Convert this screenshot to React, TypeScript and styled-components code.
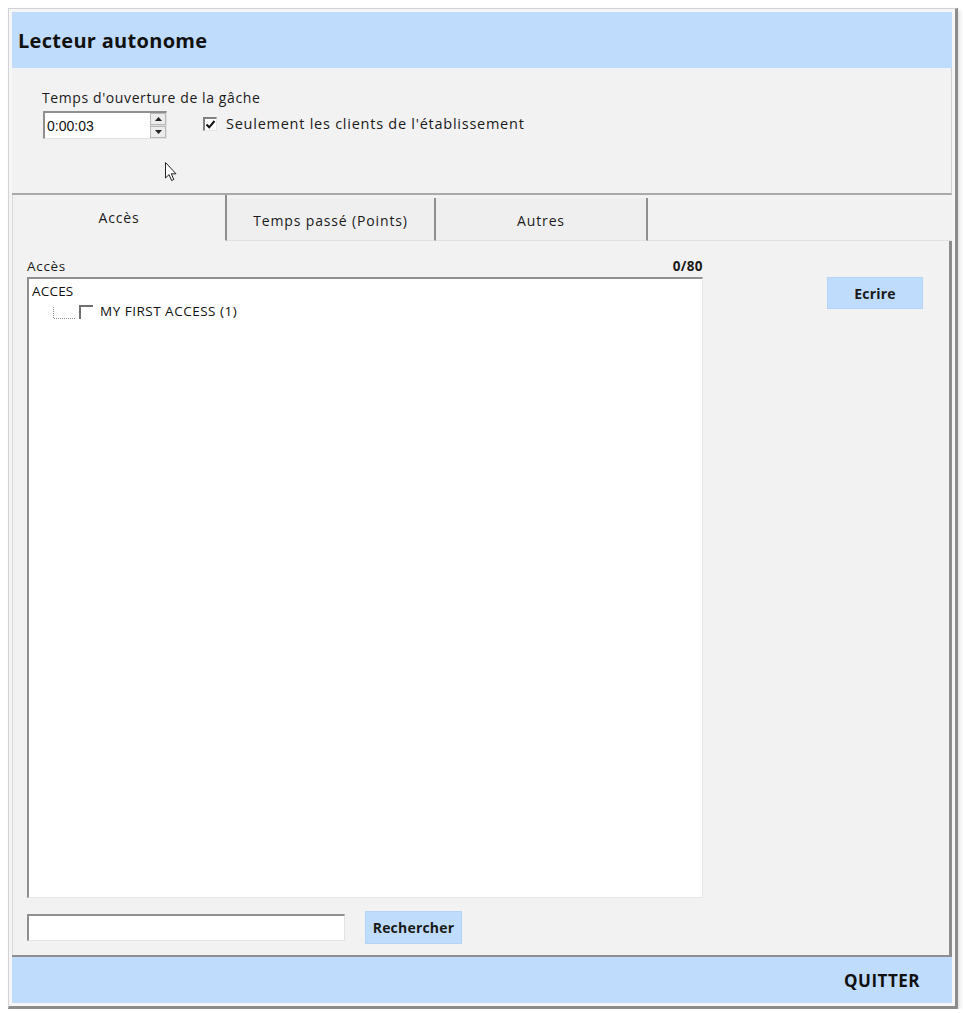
import React, { useState } from "react";
import styled, { createGlobalStyle } from "styled-components";

const FONT = `"Open Sans", "Noto Sans", "DejaVu Sans", sans-serif`;
const BLUE = "#c0dcfc";
const PANEL = "#f2f2f2";

const GlobalStyle = createGlobalStyle`
  html, body {
    margin: 0;
    padding: 0;
    background: #ffffff;
  }
  body {
    font-family: ${FONT};
    color: #1a1a1a;
  }
  * {
    box-sizing: border-box;
  }
`;

const App = () => {
  const [onlyClients, setOnlyClients] = useState<boolean>(true);
  const [access, setAccess] = useState<boolean>(false);
  const [query, setQuery] = useState<string>("");
  const [tab, setTab] = useState<number>(0);

  const tabs = [
    { label: "Accès", width: 215, offset: 0 },
    { label: "Temps passé (Points)", width: 209, offset: 3 },
    { label: "Autres", width: 212, offset: 3 },
  ];

  return (
    <>
      <GlobalStyle />
      <Window>
        <Header>
          <Title>Lecteur autonome</Title>
        </Header>

        <Settings>
          <FieldLabel>Temps d'ouverture de la gâche</FieldLabel>
          <SettingsRow>
            <Spinner>
              <SpinValue defaultValue="0:00:03" />
              <SpinButtons>
                <SpinButton>
                  <svg width="7" height="4" viewBox="0 0 7 4">
                    <path d="M0 4 L3.5 0 L7 4 Z" fill="#222" />
                  </svg>
                </SpinButton>
                <SpinButton>
                  <svg width="7" height="4" viewBox="0 0 7 4">
                    <path d="M0 0 L3.5 4 L7 0 Z" fill="#222" />
                  </svg>
                </SpinButton>
              </SpinButtons>
            </Spinner>
            <CheckLabel onClick={() => setOnlyClients(!onlyClients)}>
              <CheckBox>
                {onlyClients && (
                  <svg width="11" height="11" viewBox="0 0 11 11">
                    <path
                      d="M1.5 5.5 L4.2 8.3 L9.5 2"
                      fill="none"
                      stroke="#111"
                      strokeWidth="2"
                    />
                  </svg>
                )}
              </CheckBox>
              Seulement les clients de l'établissement
            </CheckLabel>
          </SettingsRow>
          <Cursor width="13" height="20" viewBox="0 0 13 20">
            <path
              d="M0.5 0.5 L0.5 16 L4 12.6 L6.6 18.5 L8.8 17.5 L6.3 11.8 L11 11.8 Z"
              fill="#ffffff"
              stroke="#222"
              strokeWidth="1"
              strokeLinejoin="round"
            />
          </Cursor>
        </Settings>

        <TabRow>
          {tabs.map((t, i) => (
            <Tab
              key={t.label}
              $width={t.width}
              $offset={t.offset}
              $active={tab === i}
              onClick={() => setTab(i)}
            >
              {t.label}
            </Tab>
          ))}
          <TabFiller />
        </TabRow>

        <Panel>
          <ListColumn>
            <ListHeader>
              <span>Accès</span>
              <Counter>0/80</Counter>
            </ListHeader>
            <TreeBox>
              <TreeRoot>ACCES</TreeRoot>
              <TreeItem onClick={() => setAccess(!access)}>
                <svg width="24" height="13" viewBox="0 0 24 13">
                  <path
                    d="M0.5 0 L0.5 11.5 L23 11.5"
                    fill="none"
                    stroke="#8a8a8a"
                    strokeWidth="1"
                    strokeDasharray="1 1"
                  />
                </svg>
                <TreeCheck>
                  {access && (
                    <svg width="10" height="10" viewBox="0 0 10 10">
                      <path
                        d="M1 5 L3.8 7.8 L9 1.8"
                        fill="none"
                        stroke="#111"
                        strokeWidth="2"
                      />
                    </svg>
                  )}
                </TreeCheck>
                <TreeText>MY FIRST ACCESS (1)</TreeText>
              </TreeItem>
            </TreeBox>
            <SearchRow>
              <SearchInput
                value={query}
                onChange={(e) => setQuery(e.target.value)}
              />
              <ActionButton $width={97} $height={33}>
                Rechercher
              </ActionButton>
            </SearchRow>
          </ListColumn>
          <SideColumn>
            <ActionButton $width={96} $height={32}>
              Ecrire
            </ActionButton>
          </SideColumn>
        </Panel>

        <Footer>
          <QuitButton>QUITTER</QuitButton>
        </Footer>
      </Window>
    </>
  );
};

const Window = styled.div`
  margin: 8px 0 0 8px;
  width: 950px;
  height: 1001px;
  display: flex;
  flex-direction: column;
  border: 1px solid #d2d2d2;
  border-right: 3px solid #8c8c8c;
  border-bottom: 3px solid #8c8c8c;
  padding: 3px;
  background: #f6f6f6;
  box-shadow: 2px 2px 4px rgba(0, 0, 0, 0.12);
`;

const Header = styled.div`
  height: 56px;
  flex: none;
  display: flex;
  align-items: center;
  padding-left: 6px;
  background: ${BLUE};
`;

const Title = styled.h1`
  margin: 0;
  font-family: ${FONT};
  font-size: 20px;
  font-weight: 700;
  color: #111;
  letter-spacing: 0.3px;
`;

const Settings = styled.div`
  position: relative;
  height: 127px;
  flex: none;
  padding: 21px 0 0 30px;
  background: ${PANEL};
  border-bottom: 2px solid #a9a9a9;
  border-right: 1px solid #cfcfcf;
`;

const FieldLabel = styled.div`
  font-size: 14px;
  line-height: 18px;
  letter-spacing: 0.6px;
  color: #1a1a1a;
`;

const SettingsRow = styled.div`
  display: flex;
  align-items: center;
  margin-top: 4px;
`;

const Spinner = styled.div`
  display: flex;
  width: 124px;
  height: 28px;
  margin-left: 1px;
  background: #ffffff;
  border-top: 2px solid #8f8f8f;
  border-left: 2px solid #8f8f8f;
  border-right: 1px solid #e2e2e2;
  border-bottom: 1px solid #e2e2e2;
`;

const SpinValue = styled.input`
  flex: 1;
  min-width: 0;
  border: none;
  outline: none;
  padding: 0 0 0 2px;
  font-family: "Liberation Sans", Arial, sans-serif;
  font-size: 14px;
  color: #111;
  background: transparent;
`;

const SpinButtons = styled.div`
  width: 16px;
  display: flex;
  flex-direction: column;
  gap: 1px;
  background: #dcdcdc;
`;

const SpinButton = styled.div`
  flex: 1;
  display: flex;
  align-items: center;
  justify-content: center;
  background: #ececec;
  border: 1px solid #b8b8b8;
`;

const CheckLabel = styled.label`
  display: flex;
  align-items: center;
  margin-left: 36px;
  margin-top: -3px;
  font-size: 14.5px;
  letter-spacing: 0.75px;
  color: #1a1a1a;
  cursor: default;
`;

const CheckBox = styled.span`
  width: 14px;
  height: 14px;
  margin-right: 9px;
  display: flex;
  align-items: center;
  justify-content: center;
  background: #ffffff;
  border-top: 2px solid #808080;
  border-left: 2px solid #808080;
  border-right: 1px solid #e6e6e6;
  border-bottom: 1px solid #e6e6e6;
`;

const Cursor = styled.svg`
  position: absolute;
  left: 153px;
  top: 94px;
`;

const TabRow = styled.div`
  height: 46px;
  flex: none;
  display: flex;
  background: ${PANEL};
`;

const Tab = styled.div<{ $width: number; $offset: number; $active: boolean }>`
  width: ${({ $width }) => $width}px;
  display: flex;
  align-items: center;
  justify-content: center;
  padding-top: ${({ $offset }) => $offset}px;
  font-size: 14px;
  letter-spacing: 0.85px;
  color: #1a1a1a;
  background: ${({ $active }) => ($active ? "#f2f2f2" : "#efefef")};
  border-right: 2px solid #8f8f8f;
  border-bottom: 1px solid ${({ $active }) => ($active ? PANEL : "#e2e2e2")};
  cursor: default;
  &:first-child {
    border-left: 1px solid #d8d8d8;
  }
  &:nth-child(n + 2) {
    margin-top: 3px;
  }
`;

const TabFiller = styled.div`
  flex: 1;
  border-bottom: 1px solid #e2e2e2;
`;

const Panel = styled.div`
  flex: 1;
  display: flex;
  align-items: flex-start;
  padding: 16px 0 0 14px;
  background: ${PANEL};
  border-left: 1px solid #d8d8d8;
  border-right: 3px solid #8c8c8c;
`;

const ListColumn = styled.div`
  width: 676px;
  display: flex;
  flex-direction: column;
`;

const ListHeader = styled.div`
  height: 20px;
  display: flex;
  justify-content: space-between;
  align-items: flex-start;
  font-size: 13.5px;
  line-height: 18px;
  letter-spacing: 0.7px;
  color: #1a1a1a;
`;

const Counter = styled.span`
  font-weight: 700;
  font-size: 13.5px;
  letter-spacing: 0.4px;
`;

const TreeBox = styled.div`
  height: 621px;
  padding: 3px 0 0 3px;
  background: #ffffff;
  border-top: 2px solid #8f8f8f;
  border-left: 2px solid #8f8f8f;
  border-right: 1px solid #e6e6e6;
  border-bottom: 1px solid #e6e6e6;
`;

const TreeRoot = styled.div`
  font-size: 13.5px;
  line-height: 18px;
  letter-spacing: 0.2px;
  color: #111;
`;

const TreeItem = styled.div`
  display: flex;
  align-items: flex-end;
  padding-left: 21px;
  height: 20px;
`;

const TreeCheck = styled.span`
  width: 14px;
  height: 14px;
  margin: 0 0 1px 2px;
  display: flex;
  align-items: center;
  justify-content: center;
  background: #ffffff;
  border-top: 2px solid #6f6f6f;
  border-left: 2px solid #6f6f6f;
`;

const TreeText = styled.span`
  margin-left: 7px;
  font-size: 13.5px;
  line-height: 18px;
  letter-spacing: 0.5px;
  color: #111;
`;

const SearchRow = styled.div`
  display: flex;
  align-items: center;
  gap: 20px;
  margin-top: 13px;
`;

const SearchInput = styled.input`
  width: 318px;
  height: 27px;
  padding: 0 4px;
  outline: none;
  font-family: ${FONT};
  font-size: 13.5px;
  background: #ffffff;
  border-top: 2px solid #8f8f8f;
  border-left: 2px solid #8f8f8f;
  border-right: 1px solid #e2e2e2;
  border-bottom: 1px solid #e2e2e2;
`;

const SideColumn = styled.div`
  padding: 20px 0 0 124px;
`;

const ActionButton = styled.button<{ $width: number; $height: number }>`
  width: ${({ $width }) => $width}px;
  height: ${({ $height }) => $height}px;
  padding: 0;
  border: 1px solid #b3d3f8;
  background: ${BLUE};
  font-family: ${FONT};
  font-size: 14px;
  font-weight: 700;
  letter-spacing: 0.2px;
  color: #1a1a1a;
  cursor: default;
`;

const Footer = styled.div`
  height: 48px;
  flex: none;
  display: flex;
  align-items: center;
  justify-content: flex-end;
  padding-right: 32px;
  background: ${BLUE};
  border-top: 2px solid #8f8f8f;
`;

const QuitButton = styled.button`
  border: none;
  padding: 0;
  background: transparent;
  font-family: ${FONT};
  font-size: 17px;
  font-weight: 700;
  letter-spacing: 0.5px;
  color: #111;
  cursor: default;
`;

export default App;
